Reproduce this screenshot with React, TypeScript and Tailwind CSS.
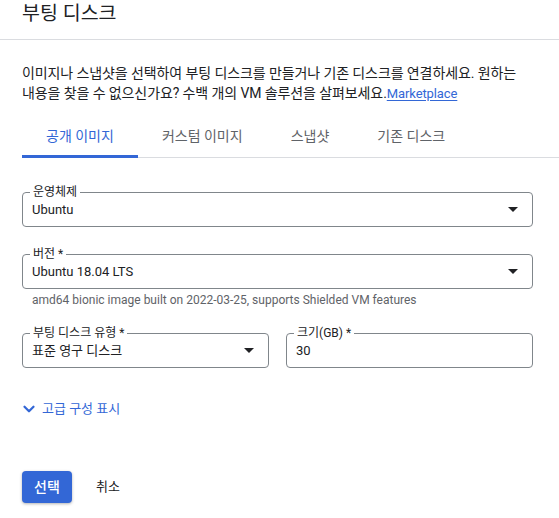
import { ChevronDown } from 'lucide-react'

const tabs = ['공개 이미지', '커스텀 이미지', '스냅샷', '기존 디스크']

function Caret() {
    return (
        <svg width="10" height="5" viewBox="0 0 10 5" className="shrink-0">
            <path d="M0 0 L10 0 L5 5 Z" fill="#202124" />
        </svg>
    )
}

function Field({ label, value, select, className = '' }: { label: string; value: string; select?: boolean; className?: string }) {
    return (
        <div className={`relative h-[35px] rounded-[4px] border border-[#80868b] flex items-center pl-[9px] pr-[14px] ${className}`}>
            {/* floating label over the border */}
            <span className="absolute left-[7px] top-[-9px] bg-white px-[3px] text-[12px] leading-[16px] text-[#202124]">
                {label}
            </span>
            <span className="flex-1 text-[13px] text-[#202124]">{value}</span>
            {select && <Caret />}
        </div>
    )
}

export default function App() {
    return (
        <div className="w-[559px] h-[518px] bg-white text-[#202124] font-['Roboto','Noto_Sans_CJK_KR',sans-serif] overflow-hidden">
            {/* Header */}
            <div className="h-[40px] border-b border-[#dadce0] px-[22px]">
                <h1 className="text-[19.5px] leading-[28px] font-normal">부팅 디스크</h1>
            </div>

            <div className="px-[22px]">
                <p className="mt-[23px] text-[14px] leading-[20px] pr-[4px] tracking-[-0.1px] break-keep">
                    이미지나 스냅샷을 선택하여 부팅 디스크를 만들거나 기존 디스크를 연결하세요. 원하는 내용을 찾을 수 없으신가요? 수백 개의 VM 솔루션을 살펴보세요.
                    <a className="text-[#3367d6] text-[13px] underline underline-offset-2">Marketplace</a>
                </p>
            </div>

            {/* Tabs */}
            <div className="ml-[22px] mt-[11px] flex border-b border-[#dadce0]">
                {tabs.map((t, i) => (
                    <div
                        key={t}
                        className={`relative h-[42px] px-[24px] flex items-center text-[14px] ${i === 0 ? 'text-[#3367d6]' : 'text-[#5f6368]'}`}
                    >
                        {t}
                        {i === 0 && <span className="absolute left-0 right-0 bottom-[-1px] h-[3px] bg-[#3367d6]" />}
                    </div>
                ))}
            </div>

            <div className="px-[22px] pr-[26px]">
                <Field className="mt-[34px]" label="운영체제" value="Ubuntu" select />
                <Field className="mt-[27px]" label="버전 *" value="Ubuntu 18.04 LTS" select />
                <div className="pl-[10px] mt-[3px] text-[12px] leading-[16px] text-[#5f6368]">
                    amd64 bionic image built on 2022-03-25, supports Shielded VM features
                </div>
                <div className="mt-[25px] flex gap-[17px]">
                    <Field className="flex-1" label="부팅 디스크 유형 *" value="표준 영구 디스크" select />
                    <Field className="flex-1" label="크기(GB) *" value="30" />
                </div>

                <button className="mt-[31px] flex items-center gap-[4px] text-[13px] leading-[20px] text-[#3367d6]">
                    <ChevronDown size={18} strokeWidth={3} className="-ml-[2px]" />
                    고급 구성 표시
                </button>

                <div className="mt-[52px] flex items-center gap-[24px]">
                    <button className="h-[32px] w-[50px] rounded-[4px] bg-[#3367d6] text-white text-[14px] font-medium shadow-[0_1px_3px_rgba(0,0,0,0.3)]">
                        선택
                    </button>
                    <button className="text-[13px] text-[#202124]">취소</button>
                </div>
            </div>
        </div>
    )
}
